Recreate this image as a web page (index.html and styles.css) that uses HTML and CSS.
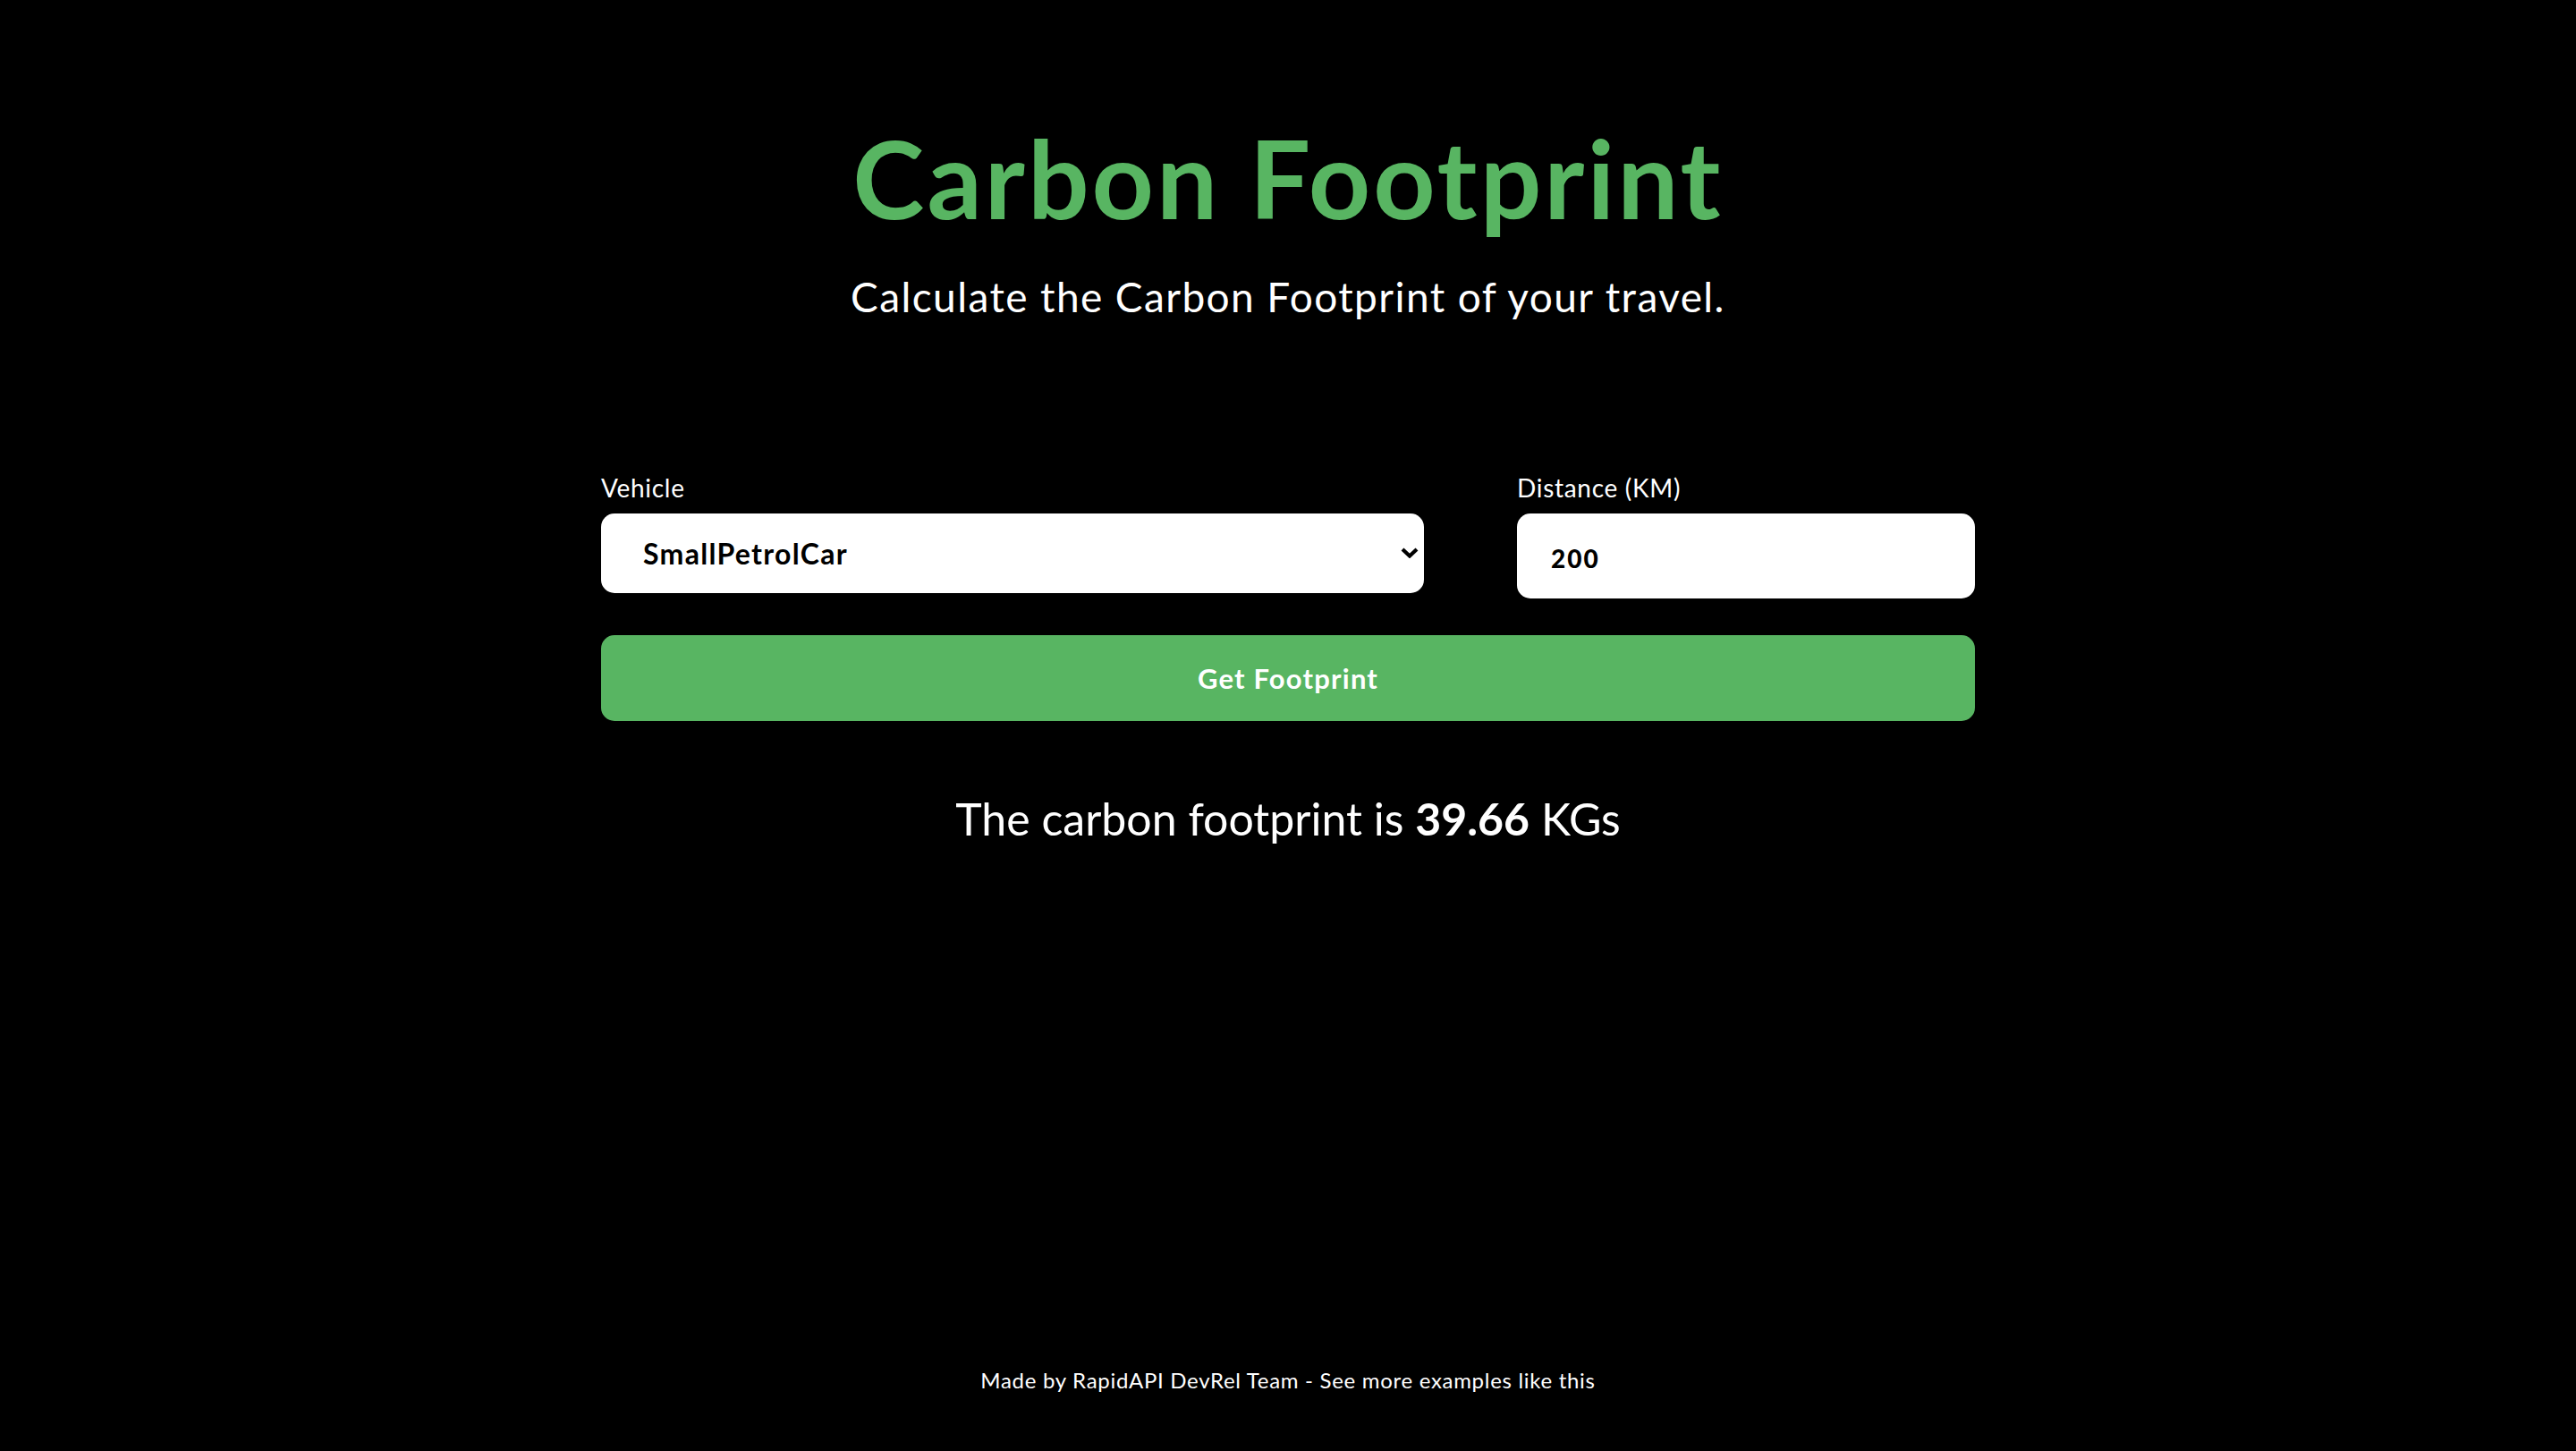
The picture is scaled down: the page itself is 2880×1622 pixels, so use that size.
FILE: index.html
```html
<!DOCTYPE html>
<html lang="en">
<head>
<meta charset="utf-8">
<title>Carbon Footprint</title>
<link rel="stylesheet" href="styles.css">
</head>
<body>
<div class="page">
  <header class="hero">
    <h1 class="title">Carbon Footprint</h1>
    <p class="subtitle">Calculate the Carbon Footprint of your travel.</p>
  </header>
  <main class="calc">
    <form class="form">
      <div class="fields">
        <div class="field">
          <label class="label" for="vehicle">Vehicle</label>
          <div class="select-wrap">
            <select id="vehicle" class="select">
              <option>SmallPetrolCar</option>
              <option>MediumPetrolCar</option>
              <option>LargePetrolCar</option>
            </select>
            <svg class="chevron" width="20" height="12" viewBox="0 0 20 12"><path d="M2 2 L10 9.5 L18 2" fill="none" stroke="#000" stroke-width="4.2"/></svg>
          </div>
        </div>
        <div class="field">
          <label class="label" for="distance">Distance (KM)</label>
          <input id="distance" class="input" type="text" value="200">
        </div>
      </div>
      <button type="button" class="button">Get Footprint</button>
    </form>
    <p class="result">The carbon footprint is <strong class="value">39.66</strong> KGs</p>
  </main>
  <footer class="footer">Made by RapidAPI DevRel Team - See more examples like this</footer>
</div>
</body>
</html>
```
FILE: styles.css
```css
* { box-sizing: border-box; }
html, body { margin: 0; padding: 0; background: #000; }
body {
  color: #fff;
  font-family: "Lato", "Open Sans", sans-serif;
}
.page {
  min-height: 100vh;
  display: flex;
  flex-direction: column;
  align-items: center;
}
.hero {
  padding-top: 138px;
  text-align: center;
}
.title {
  margin: 0;
  font-size: 121px;
  line-height: 1;
  font-weight: 700;
  letter-spacing: 3px;
  color: #58b562;
}
.subtitle {
  margin: 50px 0 0;
  font-size: 46px;
  line-height: 1;
  font-weight: 400;
  letter-spacing: 1.4px;
}
.calc {
  width: 1536px;
  margin-top: 176px;
}
.fields {
  display: grid;
  grid-template-columns: 920px 1fr;
  column-gap: 104px;
  align-items: start;
}
.field {
  display: flex;
  flex-direction: column;
}
.label {
  font-size: 28px;
  line-height: 1;
  letter-spacing: 0.7px;
  margin-bottom: 15px;
}
.select-wrap {
  position: relative;
}
.select {
  display: block;
  width: 100%;
  height: 89px;
  border: none;
  border-radius: 15px;
  background: #fff;
  color: #000;
  font-family: inherit;
  font-size: 32px;
  font-weight: 700;
  letter-spacing: 1.3px;
  padding: 0 40px 0 47px;
  appearance: none;
  -webkit-appearance: none;
  outline: none;
}
.chevron {
  position: absolute;
  right: 6px;
  top: 38px;
  pointer-events: none;
}
.input {
  display: block;
  width: 100%;
  height: 95px;
  border: none;
  border-radius: 15px;
  background: #fff;
  color: #000;
  font-family: inherit;
  font-size: 28px;
  font-weight: 900;
  letter-spacing: 2px;
  padding: 4px 38px 0;
  outline: none;
}
.button {
  display: block;
  width: 100%;
  height: 96px;
  margin-top: 41px;
  border: none;
  border-radius: 15px;
  background: #58b562;
  color: #fff;
  font-family: inherit;
  font-size: 31px;
  font-weight: 700;
  letter-spacing: 1.2px;
  cursor: pointer;
}
.result {
  margin: 84px 0 0;
  text-align: center;
  font-size: 50px;
  line-height: 1;
  font-weight: 400;
}
.value { font-weight: 700; }
.footer {
  margin-top: auto;
  padding-bottom: 67px;
  font-size: 24px;
  line-height: 1;
  letter-spacing: 0.7px;
  text-align: center;
}
```
